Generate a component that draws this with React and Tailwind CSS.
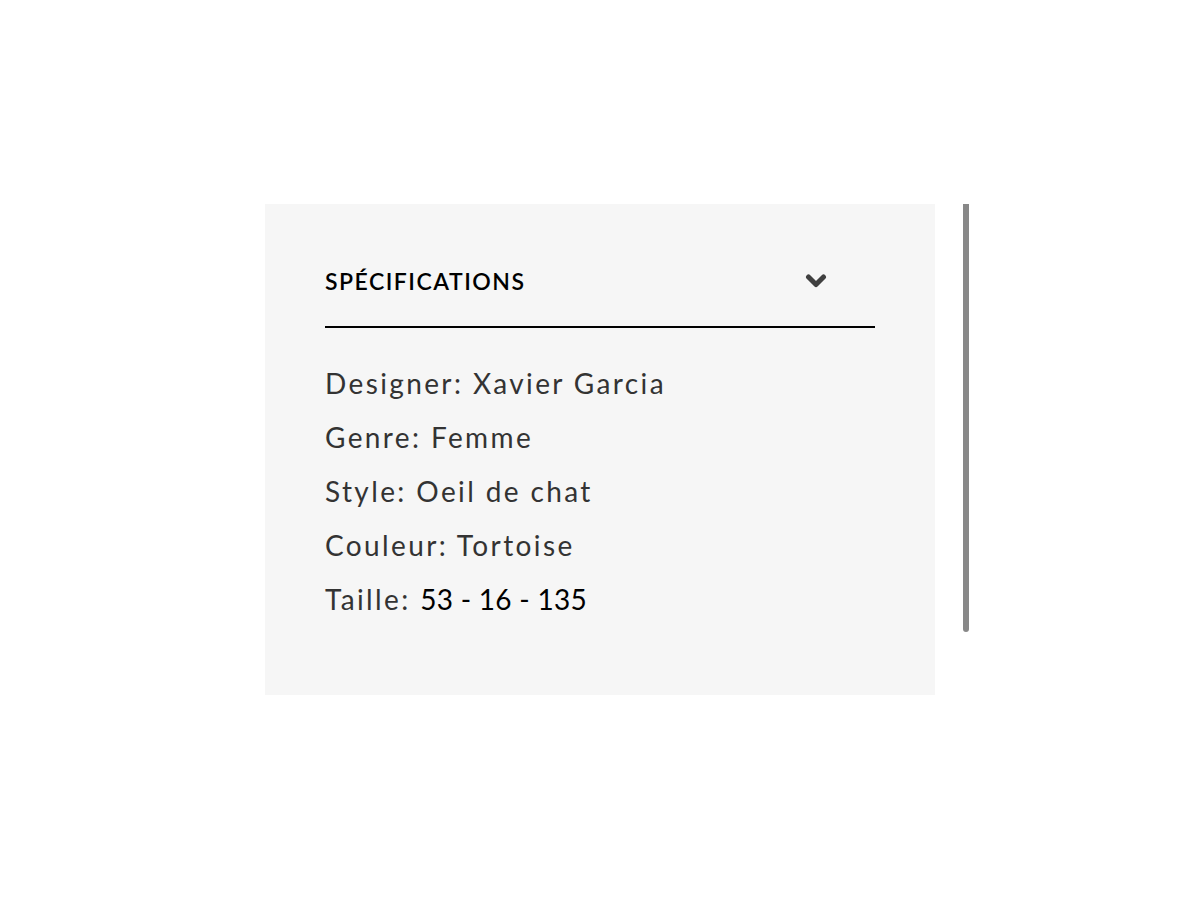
const specs = [
  { label: "Designer", value: "Xavier Garcia" },
  { label: "Genre", value: "Femme" },
  { label: "Style", value: "Oeil de chat" },
  { label: "Couleur", value: "Tortoise" },
];

const Chevron = () => (
  <svg width="22" height="16" viewBox="0 0 22 16" className="mr-[48px]">
    <polyline
      points="3.5,4 11,11.5 18.5,4"
      fill="none"
      stroke="#404040"
      strokeWidth="5"
      strokeLinecap="round"
      strokeLinejoin="round"
    />
  </svg>
);

const App = () => {
  return (
    <div className="min-h-[900px] bg-white font-['Lato',sans-serif]">
      <div className="flex items-start pl-[265px] pt-[204px]">
        <section className="h-[491px] w-[670px] bg-[#f6f6f6] px-[60px] pt-[62px]">
          <div className="flex items-center justify-between border-b-2 border-black pb-[30px]">
            <h2 className="text-[23px] font-semibold leading-[30px] tracking-[0.065em] text-black">SPÉCIFICATIONS</h2>
            <Chevron />
          </div>
          <ul className="mt-[28px] text-[28px] leading-[54px] tracking-[0.085em] text-[#333]">
            {specs.map((spec) => (
              <li key={spec.label}>
                {spec.label}: {spec.value}
              </li>
            ))}
            <li>
              Taille: <span className="tracking-[0.01em] text-black">53 - 16 - 135</span>
            </li>
          </ul>
        </section>
        <div className="ml-[28px] h-[428px] w-[6px] rounded-b-full bg-[#888]" />
      </div>
    </div>
  );
};

export default App;
